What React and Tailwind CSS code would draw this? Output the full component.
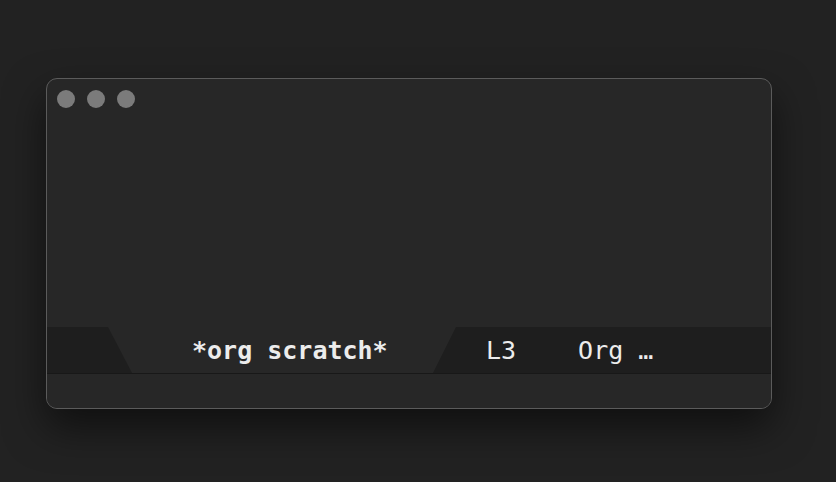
export default function App() {
  const mono = { fontFamily: '"DejaVu Sans Mono", "Liberation Mono", monospace' };
  return (
    <div className="w-[836px] h-[482px] bg-[#222222] pl-[46px] pt-[78px]">
      <div className="w-[726px] h-[331px] rounded-[11px] border border-[#5b5b5b] bg-[#272727] shadow-[0_18px_40px_rgba(0,0,0,0.55)] overflow-hidden flex flex-col">
        <div className="flex gap-[12px] pl-[10px] pt-[11px] h-[248px] items-start">
          <span className="w-[18px] h-[18px] rounded-full bg-[#7b7b7b]" />
          <span className="w-[18px] h-[18px] rounded-full bg-[#7b7b7b]" />
          <span className="w-[18px] h-[18px] rounded-full bg-[#7b7b7b]" />
        </div>
        <div className="h-[47px] bg-[#1e1e1e] border-b border-[#181818] flex items-stretch" style={mono}>
          <div className="ml-[61px] w-[348px] bg-[#272727] [clip-path:polygon(0_0,100%_0,calc(100%-23px)_100%,24px_100%)] flex items-center pl-[84px]">
            <span className="text-[25px] font-bold text-[#ececec] leading-none whitespace-pre">*org scratch*</span>
          </div>
          <div className="flex items-center pl-[30px] gap-[62px] text-[25px] text-[#ececec] leading-none">
            <span>L3</span>
            <span className="whitespace-pre">Org …</span>
          </div>
        </div>
        <div className="flex-1 bg-[#272727]" />
      </div>
    </div>
  );
}
